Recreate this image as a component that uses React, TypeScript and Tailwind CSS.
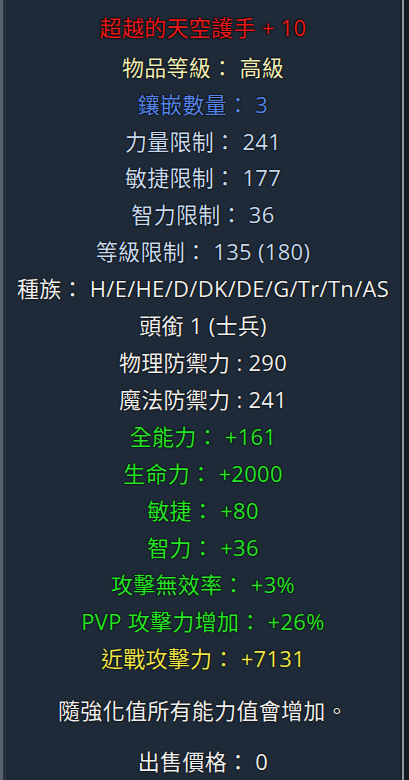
import React from 'react'

type Line = { text: string; color: string }

const lines: Line[] = [
  { text: '物品等級： 高級', color: 'text-[#f0efb8]' },
  { text: '鑲嵌數量： 3', color: 'text-[#5584e6]' },
  { text: '力量限制： 241', color: 'text-[#c6d9ee]' },
  { text: '敏捷限制： 177', color: 'text-[#c6d9ee]' },
  { text: '智力限制： 36', color: 'text-[#c6d9ee]' },
  { text: '等級限制： 135 (180)', color: 'text-[#c6d9ee]' },
  { text: '種族： H/E/HE/D/DK/DE/G/Tr/Tn/AS', color: 'text-[#f0f0f0]' },
  { text: '頭銜 1 (士兵)', color: 'text-[#f0f0f0]' },
  { text: '物理防禦力 : 290', color: 'text-[#f0f0f0]' },
  { text: '魔法防禦力 : 241', color: 'text-[#f0f0f0]' },
  { text: '全能力： +161', color: 'text-[#28e428]' },
  { text: '生命力： +2000', color: 'text-[#28e428]' },
  { text: '敏捷： +80', color: 'text-[#28e428]' },
  { text: '智力： +36', color: 'text-[#28e428]' },
  { text: '攻擊無效率： +3%', color: 'text-[#28e428]' },
  { text: 'PVP 攻擊力增加： +26%', color: 'text-[#28e428]' },
  { text: '近戰攻擊力： +7131', color: 'text-[#efe64a]' },
]

export default function App() {
  return (
    <div className="flex w-[409px] h-[780px] overflow-hidden bg-[#141a20] font-['Open_Sans','Noto_Sans_CJK_TC',sans-serif] text-[22px] leading-none tracking-[0.3px]">
      {/* left frame */}
      <div className="w-[3px] bg-[#56626d]" />
      <div className="w-[3px] bg-[#27323d]" />

      {/* tooltip body */}
      <div className="flex-1 flex flex-col items-center bg-[#1e2a38] pt-[8px] [text-shadow:0_0_2px_#000,0_0_1px_#000,0_0_1px_#000]">
        <div className="h-[38px] mb-[2.4px] flex items-center text-[#ea1a1a] [text-shadow:0_0_2px_#000,0_0_2px_#000,0_0_1px_#000]">
          超越的天空護手 + 10
        </div>

        {lines.map((l, i) => (
          <div key={i} className={`h-[37.2px] flex items-center whitespace-pre ${l.color}`}>
            {l.text}
          </div>
        ))}

        <div className="h-[37.2px] mt-[15.6px] flex items-center text-[#f0f0f0]">
          隨強化值所有能力值會增加。
        </div>
        <div className="h-[37.2px] mt-[14px] flex items-center text-[#f0f0f0]">
          出售價格： 0
        </div>
      </div>

      {/* right frame */}
      <div className="w-[2px] bg-[#18212b]" />
      <div className="w-[2px] bg-[#8c939b]" />
      <div className="w-[5px] bg-[#14191f]" />
    </div>
  )
}
